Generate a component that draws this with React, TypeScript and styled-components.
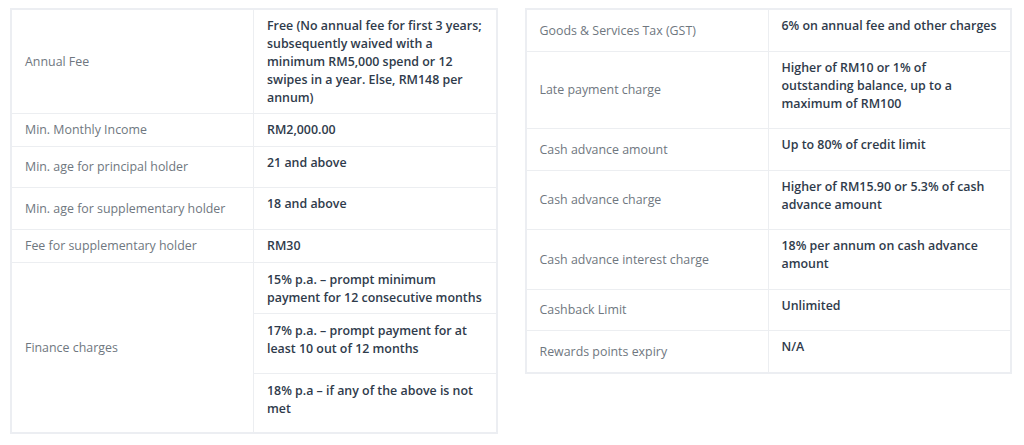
import React from "react";
import styled, { createGlobalStyle } from "styled-components";

const Global = createGlobalStyle`
  html, body { margin: 0; padding: 0; background: #ffffff; }
  body { font-family: "Open Sans", "Noto Sans", sans-serif; }
  * { box-sizing: border-box; }
`;

const Page = styled.div`
  display: flex;
  align-items: flex-start;
  gap: 27px;
  padding: 8px 12px 0 10px;
`;

const Table = styled.div`
  width: 488px;
  border: 2px solid #eceef2;
  display: flex;
  flex-direction: column;
`;

const Row = styled.div<{ $h: number; $last?: boolean }>`
  display: grid;
  grid-template-columns: 242px 1fr;
  height: ${(p) => p.$h}px;
  border-bottom: ${(p) => (p.$last ? "none" : "1px solid #eceef1")};
`;

const Label = styled.div`
  display: flex;
  align-items: center;
  padding: 0 13px;
  border-right: 1px solid #eceef1;
  color: #6f7780;
  font-size: 12.4px;
  line-height: 18px;
`;

const Value = styled.div`
  padding: 7px 13px 0 13px;
  color: #2f3b4b;
  font-size: 12.4px;
  font-weight: 600;
  line-height: 18px;
`;

const Stack = styled.div`
  display: flex;
  flex-direction: column;
`;

const SubValue = styled(Value)<{ $h: number; $last?: boolean }>`
  height: ${(p) => p.$h}px;
  padding-top: 8px;
  border-bottom: ${(p) => (p.$last ? "none" : "1px solid #eceef1")};
`;

type Item = { label: string; value: string; h: number };

const left: Item[] = [
  {
    label: "Annual Fee",
    value:
      "Free (No annual fee for first 3 years; subsequently waived with a minimum RM5,000 spend or 12 swipes in a year. Else, RM148 per annum)",
    h: 104,
  },
  { label: "Min. Monthly Income", value: "RM2,000.00", h: 33 },
  { label: "Min. age for principal holder", value: "21 and above", h: 41 },
  { label: "Min. age for supplementary holder", value: "18 and above", h: 42 },
  { label: "Fee for supplementary holder", value: "RM30", h: 33 },
];

const finance = [
  { text: "15% p.a. – prompt minimum payment for 12 consecutive months", h: 51 },
  { text: "17% p.a. – prompt payment for at least 10 out of 12 months", h: 60 },
  { text: "18% p.a – if any of the above is not met", h: 58 },
];

const right: Item[] = [
  { label: "Goods & Services Tax (GST)", value: "6% on annual fee and other charges", h: 42 },
  {
    label: "Late payment charge",
    value: "Higher of RM10 or 1% of outstanding balance, up to a maximum of RM100",
    h: 77,
  },
  { label: "Cash advance amount", value: "Up to 80% of credit limit", h: 42 },
  { label: "Cash advance charge", value: "Higher of RM15.90 or 5.3% of cash advance amount", h: 59 },
  { label: "Cash advance interest charge", value: "18% per annum on cash advance amount", h: 60 },
  { label: "Cashback Limit", value: "Unlimited", h: 41 },
  { label: "Rewards points expiry", value: "N/A", h: 41 },
];

export default function App() {
  return (
    <>
      <Global />
      <Page>
        <Table>
          {left.map((r) => (
            <Row key={r.label} $h={r.h}>
              <Label>{r.label}</Label>
              <Value>{r.value}</Value>
            </Row>
          ))}
          <Row $h={169} $last>
            <Label>Finance charges</Label>
            <Stack>
              {finance.map((f, i) => (
                <SubValue key={f.text} $h={f.h} $last={i === finance.length - 1}>
                  {f.text}
                </SubValue>
              ))}
            </Stack>
          </Row>
        </Table>
        <Table>
          {right.map((r, i) => (
            <Row key={r.label} $h={r.h} $last={i === right.length - 1}>
              <Label>{r.label}</Label>
              <Value>{r.value}</Value>
            </Row>
          ))}
        </Table>
      </Page>
    </>
  );
}
